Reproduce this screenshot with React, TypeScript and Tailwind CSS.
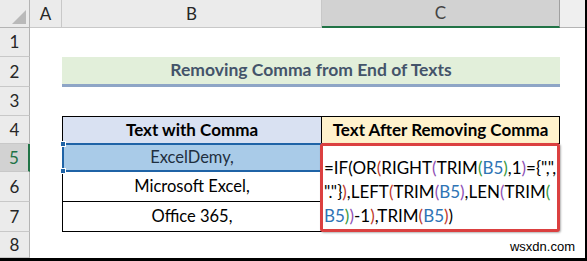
const font = { fontFamily: "Lato, 'Open Sans', sans-serif" };

const rowHeights = ["h-[29px]", "h-[30px]", "h-[29px]", "h-[28px]", "h-[28px]", "h-[30px]", "h-[30px]", "h-[26px]"];

type Part = [string, string];

const K = "text-black";
const R = "text-[#c0392b]";
const P = "text-[#8e4fb5]";
const G = "text-[#3a9a3e]";
const B = "text-[#2f74b5]";

const formulaLines: Part[][] = [
  [["=IF(OR", K], ["(", R], ["RIGHT", K], ["(", P], ["TRIM", K], ["(", G], ["B5", B], [")", G], [",1", K], [")", P], ['={",",', K]],
  [['"."}', K], [")", R], [",LEFT", K], ["(", R], ["TRIM", K], ["(", P], ["B5", B], [")", P], [",LEN", K], ["(", P], ["TRIM", K], ["(", G]],
  [["B5", B], [")", G], [")", P], ["-1", K], [")", R], [",TRIM", K], ["(", R], ["B5", B], [")", R], [")", K]],
];

function RowHead({ n, active }: { n: number; active?: boolean }) {
  return (
    <div
      className={`${rowHeights[n - 1]} flex items-center justify-center border-b border-[#c8c8c8] text-[17px] ${
        active ? "bg-[#d2d2d2] text-[#217346] border-r-2 border-r-[#217346]" : "bg-[#ebebeb] text-[#262626] border-r border-r-[#b4b4b4]"
      }`}
    >
      {n}
    </div>
  );
}

export default function App() {
  return (
    <div className="relative w-[587px] h-[261px] overflow-hidden bg-white border-r-2 border-b-[3px] border-black" style={font}>
      {/* column headers */}
      <div className="flex h-[28px] text-[17px] text-[#262626]">
        <div className="w-[30px] bg-[#ebebeb] border-r border-b border-[#b4b4b4] relative">
          <div className="absolute right-[3px] bottom-[3px] w-0 h-0 border-l-[14px] border-l-transparent border-b-[14px] border-b-[#b9b9b9]" />
        </div>
        <div className="w-[32px] bg-[#ebebeb] border-r border-b border-[#c8c8c8] flex items-center justify-center">A</div>
        <div className="w-[260px] bg-[#ebebeb] border-r border-b border-[#c8c8c8] flex items-center justify-center">B</div>
        <div className="w-[238px] bg-[#d2d2d2] border-r border-r-[#a0a0a0] border-b-2 border-b-[#217346] flex items-center justify-center text-[#444]">C</div>
        <div className="flex-1 bg-[#efefef] border-b border-[#b4b4b4]" />
      </div>

      <div className="grid grid-cols-[30px_32px_260px_238px_1fr]">
        {/* row 1 */}
        <RowHead n={1} />
        <div className="col-span-4" />

        {/* row 2 */}
        <RowHead n={2} />
        <div />
        <div className="col-span-2 h-[30px] bg-[#e2efda] border-b-[3px] border-[#8ea5c6] flex items-center justify-center text-[17.5px] font-bold text-[#44546a]">
          Removing Comma from End of Texts
        </div>
        <div />

        {/* row 3 */}
        <RowHead n={3} />
        <div className="col-span-4" />

        {/* row 4 */}
        <RowHead n={4} />
        <div />
        <div className="bg-[#d9e1f2] border border-black flex items-center justify-center text-[17px] font-bold text-black">Text with Comma</div>
        <div className="bg-[#fff2cc] border-t border-r border-b border-black flex items-center justify-center text-[17px] font-bold text-black">
          Text After Removing Comma
        </div>
        <div />

        {/* row 5 */}
        <RowHead n={5} active />
        <div />
        <div className="relative bg-[#a9cbe8] border-2 border-[#1f63a6] -mt-px flex items-center justify-center text-[16.5px] text-[#1f2f3f]">
          ExcelDemy,
          <span className="absolute -left-[4px] -top-[4px] w-[6px] h-[6px] bg-[#1f63a6] border border-white" />
          <span className="absolute -left-[4px] -bottom-[4px] w-[6px] h-[6px] bg-[#1f63a6] border border-white" />
        </div>
        <div className="row-span-3 relative z-10 -ml-[2px] -mt-[1px] bg-white border-[3px] border-[#db4040] rounded-[3px] shadow-[1px_1px_2px_rgba(0,0,0,0.3)] pl-[1px] pt-[10px] text-[17px] leading-[24px] whitespace-nowrap">
          {formulaLines.map((line, i) => (
            <div key={i}>
              {line.map(([t, c], j) => (
                <span key={j} className={c}>
                  {t}
                </span>
              ))}
            </div>
          ))}
        </div>
        <div />

        {/* row 6 */}
        <RowHead n={6} />
        <div />
        <div className="border-l border-r border-b border-black flex items-center justify-center text-[16.5px] text-black">Microsoft Excel,</div>
        <div />

        {/* row 7 */}
        <RowHead n={7} />
        <div />
        <div className="border-l border-r border-b border-black flex items-center justify-center text-[16.5px] text-black">Office 365,</div>
        <div />

        {/* row 8 */}
        <RowHead n={8} />
        <div className="col-span-4" />
      </div>

      <span className="absolute right-[10px] bottom-[2px] text-[13px] text-black" style={{ fontFamily: "'Liberation Sans', Arial, sans-serif" }}>
        wsxdn.com
      </span>
    </div>
  );
}
